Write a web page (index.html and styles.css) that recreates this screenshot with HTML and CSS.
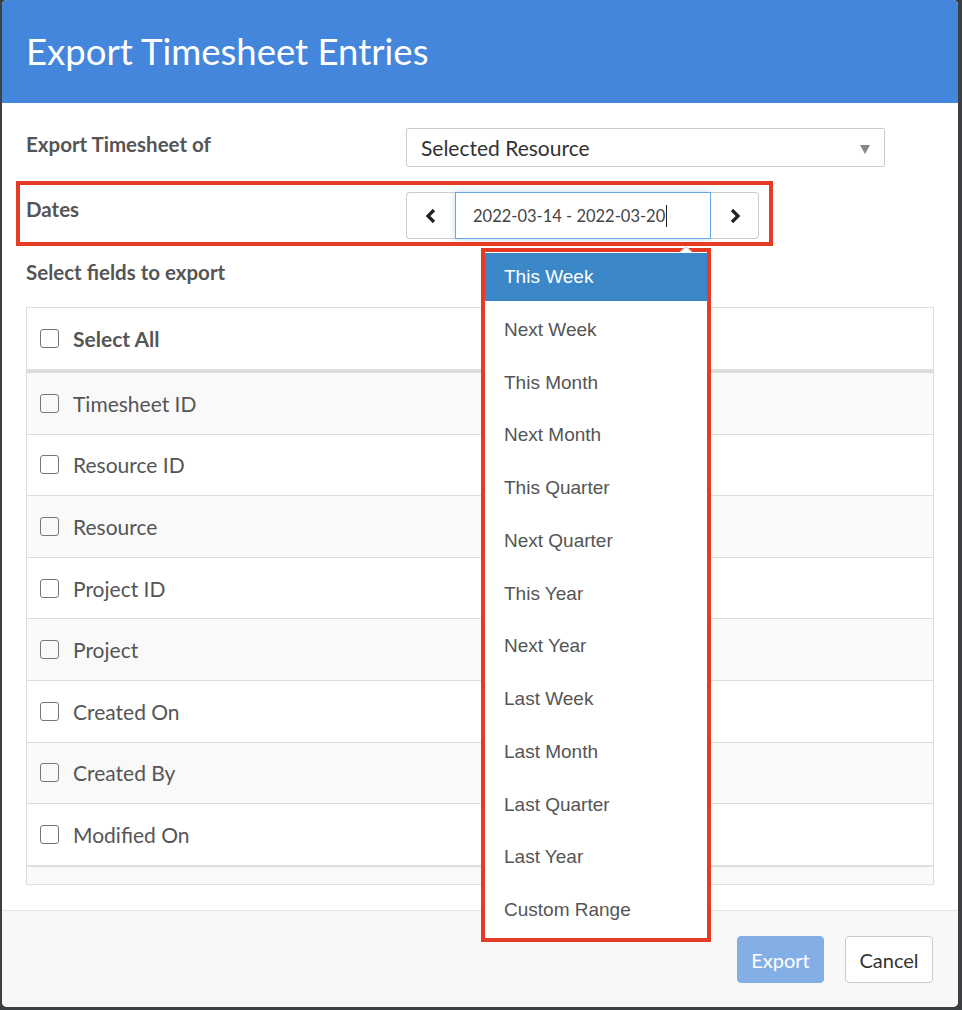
FILE: index.html
```html
<!DOCTYPE html>
<html lang="en">
<head>
    <meta charset="UTF-8">
    <title>Export Timesheet Entries</title>
    <link rel="stylesheet" href="styles.css">
</head>
<body>
    <div class="modal">
        <div class="modal-header">
            <h1>Export Timesheet Entries</h1>
        </div>
        <div class="modal-body">
            <div class="form-row">
                <label class="form-label">Export Timesheet of</label>
                <div class="select-box">
                    <span>Selected Resource</span>
                    <span class="select-arrow"></span>
                </div>
            </div>
            <div class="form-row dates-row">
                <label class="form-label">Dates</label>
                <div class="date-group">
                    <button class="date-btn">
                        <svg width="14" height="16" viewBox="0 0 14 16"><path d="M10 2 L4 8 L10 14" fill="none" stroke="#222" stroke-width="3.2" stroke-linejoin="miter"/></svg>
                    </button>
                    <div class="date-input">2022-03-14 - 2022-03-20<span class="text-cursor"></span></div>
                    <button class="date-btn">
                        <svg width="14" height="16" viewBox="0 0 14 16"><path d="M4 2 L10 8 L4 14" fill="none" stroke="#222" stroke-width="3.2" stroke-linejoin="miter"/></svg>
                    </button>
                </div>
            </div>
            <div class="section-title">Select fields to export</div>
            <div class="fields-table">
                <div class="field-row head-row"><span class="checkbox"></span><b>Select All</b></div>
                <div class="field-row striped"><span class="checkbox"></span>Timesheet ID</div>
                <div class="field-row"><span class="checkbox"></span>Resource ID</div>
                <div class="field-row striped"><span class="checkbox"></span>Resource</div>
                <div class="field-row"><span class="checkbox"></span>Project ID</div>
                <div class="field-row striped"><span class="checkbox"></span>Project</div>
                <div class="field-row"><span class="checkbox"></span>Created On</div>
                <div class="field-row striped"><span class="checkbox"></span>Created By</div>
                <div class="field-row"><span class="checkbox"></span>Modified On</div>
                <div class="table-foot"></div>
            </div>
        </div>
        <div class="modal-footer">
            <button class="btn btn-export">Export</button>
            <button class="btn btn-cancel">Cancel</button>
        </div>

        <div class="ranges">
            <span class="ranges-arrow"></span>
            <ul>
                <li class="active">This Week</li>
                <li>Next Week</li>
                <li>This Month</li>
                <li>Next Month</li>
                <li>This Quarter</li>
                <li>Next Quarter</li>
                <li>This Year</li>
                <li>Next Year</li>
                <li>Last Week</li>
                <li>Last Month</li>
                <li>Last Quarter</li>
                <li>Last Year</li>
                <li>Custom Range</li>
            </ul>
        </div>
    </div>
</body>
</html>
```
FILE: styles.css
```css
body {
    margin: 0;
    background-color: #3d4042;
    font-family: Lato, "Noto Sans", sans-serif;
    color: #555;
}
.modal {
    position: relative;
    margin: 0 4px 0 2px;
    height: 1007px;
    background: white;
    border-radius: 5px;
    overflow: hidden;
    display: flex;
    flex-direction: column;
}
.modal-header {
    background-color: #4386dc;
    height: 103px;
    padding-left: 24px;
    display: flex;
    align-items: center;
}
.modal-header h1 {
    margin: 0;
    color: white;
    font-weight: 400;
    font-size: 36.5px;
    padding-bottom: 2px;
}
.modal-body {
    flex: 1;
    padding: 25px 24px 0 24px;
}
.form-row {
    display: flex;
    align-items: flex-start;
}
.form-label {
    width: 380px;
    flex-shrink: 0;
    font-weight: 700;
    font-size: 20.5px;
    padding-top: 4px;
}
.select-box {
    width: 479px;
    height: 39px;
    box-sizing: border-box;
    border: 1px solid #ccc;
    border-radius: 2px;
    display: flex;
    align-items: center;
    justify-content: space-between;
    padding: 0 14px 0 14px;
    font-size: 21px;
    color: #333;
}
.select-arrow {
    width: 0;
    height: 0;
    border-left: 5px solid transparent;
    border-right: 5px solid transparent;
    border-top: 9px solid #888;
    margin-top: 4px;
}
.dates-row {
    margin: 18px 0 0 -6px;
    width: 749px;
    padding: 7px 6px 3px;
    box-sizing: border-box;
    outline: 4px solid #e63c26;
}
.dates-row .form-label {
    padding-top: 5px;
}
.date-group {
    display: flex;
    height: 47px;
}
.date-btn {
    width: 49px;
    background: white;
    border: 1px solid #ccc;
    display: flex;
    align-items: center;
    justify-content: center;
    padding: 0;
}
.date-btn:first-child {
    border-radius: 4px 0 0 4px;
    border-right: none;
}
.date-btn:last-child {
    width: 48px;
    border-radius: 0 4px 4px 0;
    border-left: none;
}
.date-input {
    width: 256px;
    box-sizing: border-box;
    border: 1px solid #66a7e6;
    box-shadow: 0 0 6px rgba(102, 167, 230, 0.45);
    display: flex;
    align-items: center;
    padding-left: 17px;
    font-size: 16.5px;
    color: #444;
}
.text-cursor {
    display: inline-block;
    width: 1px;
    height: 22px;
    background: #222;
    margin-left: 1px;
}
.section-title {
    font-weight: 700;
    font-size: 20.5px;
    margin-top: 18px;
    height: 47px;
}
.fields-table {
    border: 1px solid #ddd;
}
.field-row {
    height: 60.6px;
    display: flex;
    align-items: center;
    padding-left: 13px;
    font-size: 21px;
    border-top: 1px solid #ddd;
    background: white;
}
.field-row b {
    font-weight: 700;
}
.head-row {
    border-top: none;
    height: 61px;
    border-bottom: 4px solid #ddd;
}
.head-row + .field-row {
    border-top: none;
}
.striped {
    background: #f9f9f9;
}
.checkbox {
    width: 17px;
    height: 17px;
    border: 1.5px solid #777;
    border-radius: 3px;
    margin-right: 14px;
    flex-shrink: 0;
}
.table-foot {
    height: 17px;
    background: #f9f9f9;
    border-top: 2px solid #ddd;
}
.modal-footer {
    height: 97px;
    border-top: 1px solid #e5e5e5;
    background: #f8f8f8;
    display: flex;
    justify-content: flex-end;
    align-items: flex-start;
    padding: 25px 25px 0 0;
    box-sizing: border-box;
}
.btn {
    height: 47px;
    font-family: Lato, "Noto Sans", sans-serif;
    font-size: 20px;
    border-radius: 4px;
    padding: 0;
}
.btn-export {
    width: 87px;
    background: #84afe6;
    border: 1px solid #84afe6;
    color: white;
}
.btn-cancel {
    width: 88px;
    margin-left: 21px;
    background: white;
    border: 1px solid #ccc;
    color: #333;
}
.ranges {
    position: absolute;
    left: 479px;
    top: 248px;
    width: 230px;
    height: 694px;
    box-sizing: border-box;
    border: 4px solid #e63c26;
    background: white;
    font-family: "Liberation Sans", Arial, sans-serif;
}
.ranges-arrow {
    position: absolute;
    top: -4px;
    left: 196px;
    width: 9px;
    height: 9px;
    background: white;
    border-left: 1px solid #ddd;
    border-top: 1px solid #ddd;
    transform: rotate(45deg);
}
.ranges ul {
    position: relative;
    list-style: none;
    margin: 1px 0 0;
    padding: 0;
}
.ranges li {
    height: 48px;
    margin-bottom: 4.75px;
    padding-left: 19px;
    display: flex;
    align-items: center;
    font-size: 19px;
    color: #555;
    background: white;
}
.ranges li.active {
    background: #3b87c7;
    color: white;
}
```
